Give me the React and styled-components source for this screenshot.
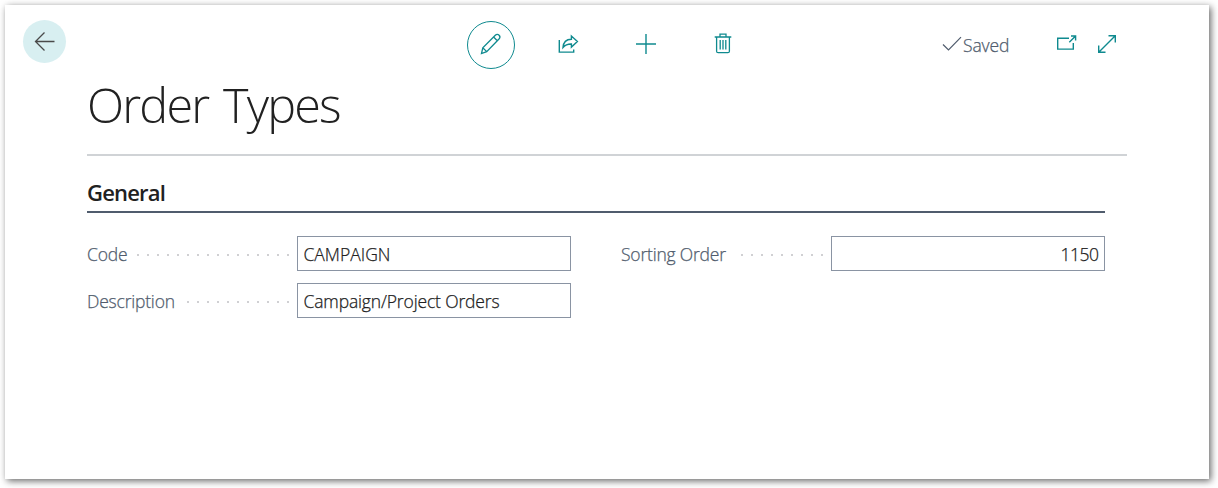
import React from "react";
import styled, { createGlobalStyle } from "styled-components";

const Global = createGlobalStyle`
  * { box-sizing: border-box; }
  body {
    display: flow-root;
    height: 488px;
    margin: 0;
    background: #fff;
    overflow: hidden;
    font-family: "Open Sans", "Noto Sans", sans-serif;
  }
`;

const Panel = styled.main`
  width: 1204px;
  height: 474px;
  margin: 5px;
  padding: 15px 82px 0 18px;
  background: #fff;
  box-shadow: 2px 2px 7px rgba(0, 0, 0, 0.6);
`;

const Toolbar = styled.header`
  display: flex;
  align-items: flex-start;
  height: 54px;
  color: #0f8a8f;
  svg { display: block; fill: none; stroke: currentColor; }
`;

const BackButton = styled.button`
  display: grid;
  place-items: center;
  flex: none;
  width: 43px;
  height: 43px;
  padding: 0 0 1px;
  border: 0;
  border-radius: 50%;
  background: #d8eff1;
  color: #4a4a4a;
`;

const Actions = styled.div`
  display: flex;
  align-items: center;
  height: 48px;
  margin: 1px 0 0 401px;
`;

const Action = styled.button`
  display: grid;
  place-items: center;
  width: ${(p) => p.$w}px;
  height: 48px;
  padding: ${(p) => (p.$ring ? "0 0 2px" : "0 0 3px")};
  border: ${(p) => (p.$ring ? "1px solid #0f8a8f" : "0")};
  border-radius: ${(p) => (p.$ring ? "50%" : "0")};
  background: none;
  color: inherit;
`;

const Status = styled.div`
  display: flex;
  align-items: center;
  height: 48px;
  margin-left: 167px;
`;

const Check = styled.svg`
  color: #505c6d;
`;

const Saved = styled.span`
  width: 93px;
  margin-left: 1px;
  padding-top: 2px;
  font-size: 17.5px;
  letter-spacing: -0.1px;
  line-height: 24px;
  font-weight: 300;
  color: #505c6d;
  -webkit-text-stroke: 0.25px currentColor;
`;

const WindowIcons = styled.div`
  display: flex;
  gap: 20px;
`;

const Page = styled.section`
  width: 1040px;
  margin-left: 64px;
`;

const Title = styled.h1`
  height: 82px;
  margin: 0;
  border-bottom: 2px solid #d0d3d6;
  font-size: 48.5px;
  line-height: 60px;
  font-weight: 300;
  letter-spacing: -1.8px;
  word-spacing: 4px;
  color: #212121;
  white-space: nowrap;
`;

const Group = styled.section`
  width: 1018px;
`;

const GroupTitle = styled.h2`
  height: 57px;
  margin: 0;
  padding-top: 20px;
  border-bottom: 2px solid #505c6d;
  font-size: 22px;
  line-height: 32px;
  font-weight: 600;
  letter-spacing: -0.8px;
  color: #212121;
`;

const Fields = styled.div`
  display: grid;
  grid-template-columns: 484px 484px;
  column-gap: 50px;
  row-gap: 12px;
  padding-top: 23px;
`;

const Field = styled.label`
  display: flex;
  align-items: center;
  height: 35px;
`;

const Leader = styled.span`
  width: 202px;
  height: 35px;
  margin-right: 8px;
  background: radial-gradient(circle at 1px 1px, #d0d0d3 1px, transparent 1.4px) 0 18px / 10px 10px repeat-x;
`;

const Caption = styled.span`
  display: inline-block;
  height: 35px;
  padding: 2px 9px 0 0;
  background: #fff;
  font-size: 17.5px;
  line-height: 33px;
  font-weight: 300;
  letter-spacing: -0.2px;
  color: #505c6d;
  -webkit-text-stroke: 0.25px currentColor;
`;

const Input = styled.input`
  width: 274px;
  height: 35px;
  padding: 0 5.5px;
  border: 1px solid #8a94a3;
  border-radius: 0;
  outline: 0;
  font: 300 17.5px "Open Sans", "Noto Sans", sans-serif;
  letter-spacing: ${(p) => p.$track}px;
  text-align: ${(p) => (p.$numeric ? "right" : "left")};
  color: #212121;
  -webkit-text-stroke: 0.25px currentColor;
`;

const fields = [
  { label: "Code", value: "CAMPAIGN", valueTrack: 0 },
  { label: "Sorting Order", value: "1150", valueTrack: -0.5, numeric: true },
  { label: "Description", value: "Campaign/Project Orders", valueTrack: -0.15 },
];

export default function App() {
  return (
    <>
      <Global />
      <Panel>
        <Toolbar>
          <BackButton aria-label="Back">
            <svg width="22" height="20" viewBox="0 0 22 20" strokeWidth="1.3"><path d="M20.5 10.5H1.5M10.5 1.5l-9 9 9 9" /></svg>
          </BackButton>
          <Actions>
            <Action $w={48} $ring aria-label="Edit">
              <svg width="22" height="22" viewBox="0 0 22 22" strokeWidth="1.3">
                <path d="M1.5 20.5l1.3-5.7L15.3 2.3c1.2-1.2 2.8-1.1 3.8-.1s1 2.6-.1 3.8L6.7 18.6zM2.8 14.8l3.9 3.8M13.6 4l3.7 3.7" />
              </svg>
            </Action>
            <Action $w={106} aria-label="Share">
              <svg width="22" height="20" viewBox="0 0 22 20" strokeWidth="1.4">
                <path d="M2.3 6v12.1h14.4v-2.5M6 13.5C6.3 8.4 9.2 5.3 14.4 5.2V2l6 5.6-6 5.5V10c-3.7-.1-6.2 1-8.4 3.5z" />
              </svg>
            </Action>
            <Action $w={50} aria-label="New">
              <svg width="20" height="20" viewBox="0 0 20 20" strokeWidth="1.4"><path d="M10 0v20M0 10h20" /></svg>
            </Action>
            <Action $w={104} aria-label="Delete">
              <svg width="18" height="21" viewBox="0 0 18 21" strokeWidth="1.3">
                <path d="M.7 4h16.6M6 4V1.2h6V4M2.6 4v14.2q0 1.5 1.5 1.5h9.8q1.5 0 1.5-1.5V4M6.2 7v9.5M9 7v9.5M11.8 7v9.5" />
              </svg>
            </Action>
          </Actions>
          <Status>
            <Check width="20" height="16" viewBox="0 0 20 16" strokeWidth="1.2"><path d="M1 8.5l5.5 5.5L19 1.2" /></Check>
            <Saved>Saved</Saved>
            <WindowIcons>
              <svg width="21" height="18" viewBox="0 0 21 18" strokeWidth="1.4">
                <path d="M13 4.3H1.7v10.8h15.6V9M13.3 8.3l6-6M15 2h4.6v4.6" />
              </svg>
              <svg width="20" height="20" viewBox="0 0 20 20" strokeWidth="1.4">
                <path d="M2 18L18 2M11.5 1.7h6.8v6.8M1.7 11.5v6.8h6.8" />
              </svg>
            </WindowIcons>
          </Status>
        </Toolbar>
        <Page>
          <Title>Order Types</Title>
          <Group>
            <GroupTitle>General</GroupTitle>
            <Fields>
              {fields.map((f) => (
                <Field key={f.label}>
                  <Leader><Caption>{f.label}</Caption></Leader>
                  <Input readOnly value={f.value} $numeric={f.numeric} $track={f.valueTrack} />
                </Field>
              ))}
            </Fields>
          </Group>
        </Page>
      </Panel>
    </>
  );
}
